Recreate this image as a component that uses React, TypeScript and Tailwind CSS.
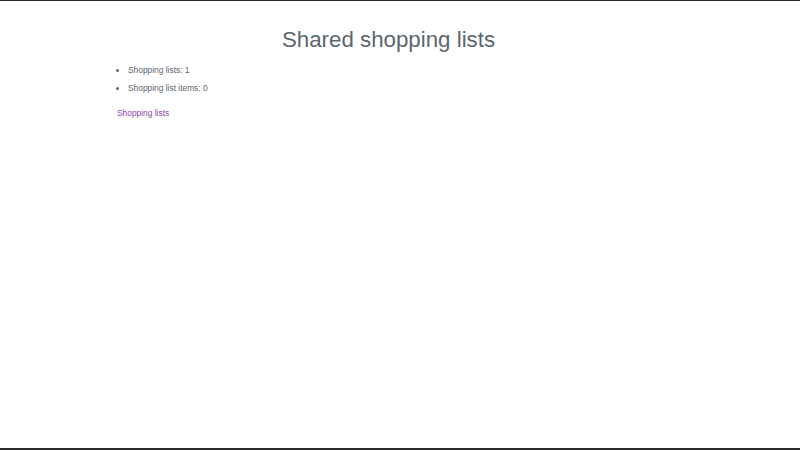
import React from "react";

export default function App() {
  return (
    <div
      className="w-[800px] h-[450px] bg-white border-t border-b-2 border-[#2a2a2a] flex flex-col overflow-hidden"
      style={{ fontFamily: '"Liberation Sans", Arial, sans-serif' }}
    >
      <div className="w-[777px] pt-[26px]">
        <h1 className="text-center text-[22.3px] leading-[26px] text-[#5a6670] font-normal">
          Shared shopping lists
        </h1>
        <div className="pl-[117px] pt-[12px]">
          <ul className="list-disc pl-[11px] text-[8.4px] leading-[10px] text-[#5d666e] flex flex-col gap-[8px]">
            <li>Shopping lists: 1</li>
            <li>Shopping list items: 0</li>
          </ul>
          <a className="block mt-[15px] text-[8.4px] leading-[10px] text-[#8e44ad]" href="#">
            Shopping lists
          </a>
        </div>
      </div>
    </div>
  );
}
